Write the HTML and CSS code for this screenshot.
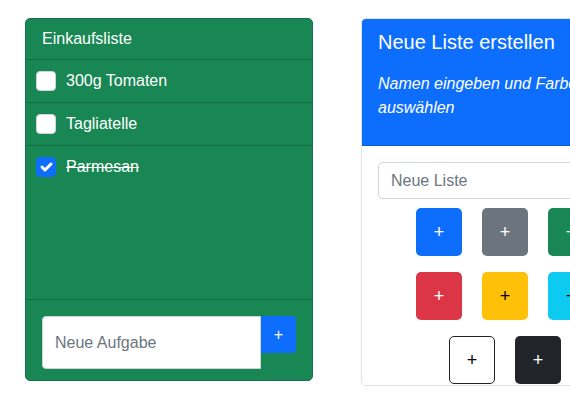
FILE: index.html
```html
<!DOCTYPE html>
<html lang="de">
<head>
<meta charset="utf-8">
<title>Listen</title>
<link rel="stylesheet" href="styles.css">
</head>
<body>
<main class="board">
  <section class="card card-list">
    <div class="list-header">Einkaufsliste</div>
    <ul class="items">
      <li class="item"><span class="check"></span><span class="label">300g Tomaten</span></li>
      <li class="item"><span class="check"></span><span class="label">Tagliatelle</span></li>
      <li class="item done"><span class="check checked"><svg viewBox="0 0 20 20" width="20" height="20"><path d="M6 10l3 3l6-6" fill="none" stroke="#fff" stroke-width="3" stroke-linecap="round" stroke-linejoin="round"/></svg></span><span class="label">Parmesan</span></li>
    </ul>
    <div class="list-footer">
      <div class="input-group">
        <input class="task-input" type="text" placeholder="Neue Aufgabe">
        <button class="add-btn" type="button">+</button>
      </div>
    </div>
  </section>

  <section class="card card-new">
    <div class="new-header">
      <h5 class="new-title">Neue Liste erstellen</h5>
      <p class="new-sub">Namen eingeben und Farbe auswählen</p>
    </div>
    <div class="new-body">
      <input class="name-input" type="text" placeholder="Neue Liste">
      <div class="swatches">
        <button class="swatch sw-primary" type="button">+</button>
        <button class="swatch sw-secondary" type="button">+</button>
        <button class="swatch sw-success" type="button">+</button>
        <button class="swatch sw-danger" type="button">+</button>
        <button class="swatch sw-warning" type="button">+</button>
        <button class="swatch sw-info" type="button">+</button>
        <button class="swatch sw-light" type="button">+</button>
        <button class="swatch sw-dark" type="button">+</button>
      </div>
    </div>
  </section>
</main>
</body>
</html>
```

FILE: styles.css
```css
* { box-sizing: border-box; }
html, body { overflow: hidden; }
body {
  margin: 0;
  padding: 18px 0 0 25px;
  font-family: "Liberation Sans", Arial, sans-serif;
  font-size: 16px;
  line-height: 1.5;
  color: #212529;
  background: #fff;
}
.board {
  display: flex;
  align-items: flex-start;
  gap: 48px;
}
.card {
  flex: 0 0 288px;
  width: 288px;
  border-radius: 5px;
  overflow: hidden;
}

/* left list card */
.card-list {
  height: 363px;
  display: flex;
  flex-direction: column;
  background: #198754;
  border: 1px solid #167249;
  color: #fff;
}
.list-header {
  padding: 8px 16px;
  border-bottom: 1px solid #146c43;
}
.items {
  list-style: none;
  margin: 0;
  padding: 0;
  flex: 1;
}
.item {
  display: flex;
  align-items: center;
  gap: 10px;
  padding: 11px 10px;
  line-height: 20px;
  border-bottom: 1px solid #146c43;
}
.item:last-child { border-bottom: 0; }
.check {
  width: 20px;
  height: 20px;
  flex: 0 0 20px;
  background: #fff;
  border: 1px solid #ced4da;
  border-radius: 4px;
  display: flex;
}
.check.checked {
  background: #0d6efd;
  border-color: #0d6efd;
}
.check svg { margin: -1px; }
.done .label { text-decoration: line-through; }
.list-footer {
  border-top: 1px solid #146c43;
  padding: 16px 16px 11px;
}
.input-group {
  display: flex;
  align-items: flex-start;
}
.task-input {
  width: 219px;
  height: 53px;
  margin: 0;
  padding: 0 12px;
  font: inherit;
  font-size: 16px;
  color: #212529;
  background: #fff;
  border: 1px solid #ced4da;
  border-radius: 4px 0 0 4px;
}
.task-input::placeholder, .name-input::placeholder { color: #6c757d; opacity: 1; }
.add-btn {
  width: 35px;
  height: 37px;
  margin: 0;
  padding: 0;
  border: 0;
  border-radius: 0 4px 4px 0;
  background: #0d6efd;
  color: #fff;
  font: inherit;
  font-size: 16px;
  line-height: 37px;
}

/* right create card */
.card-new {
  border: 1px solid #dee2e6;
  background: #fff;
}
.new-header {
  background: #0d6efd;
  color: #fff;
  padding: 11px 16px 0;
  border-bottom: 1px solid #0b5ed7;
}
.new-title {
  margin: 0 0 18px;
  font-size: 20px;
  font-weight: 400;
  line-height: 24px;
}
.new-sub {
  margin: 0 0 25px;
  font-style: italic;
  line-height: 24px;
}
.new-body {
  padding: 16px 16px 1px;
}
.name-input {
  display: block;
  width: 100%;
  height: 37px;
  margin: 0;
  padding: 0 12px;
  font: inherit;
  font-size: 16px;
  color: #212529;
  background: #fff;
  border: 1px solid #ced4da;
  border-radius: 5px;
}
.swatches {
  margin-top: 9px;
  display: flex;
  flex-wrap: wrap;
  justify-content: center;
  row-gap: 16px;
}
.swatch {
  width: 46px;
  height: 48px;
  margin: 0 10px;
  padding: 0;
  border: 1px solid transparent;
  border-radius: 5px;
  font: inherit;
  font-size: 18px;
  line-height: 1;
  color: #fff;
}
.sw-primary { background: #0d6efd; }
.sw-secondary { background: #6c757d; }
.sw-success { background: #198754; }
.sw-danger { background: #dc3545; }
.sw-warning { background: #ffc107; color: #000; }
.sw-info { background: #0dcaf0; color: #000; }
.sw-light { background: #fff; border-color: #212529; color: #000; }
.sw-dark { background: #212529; }
```
